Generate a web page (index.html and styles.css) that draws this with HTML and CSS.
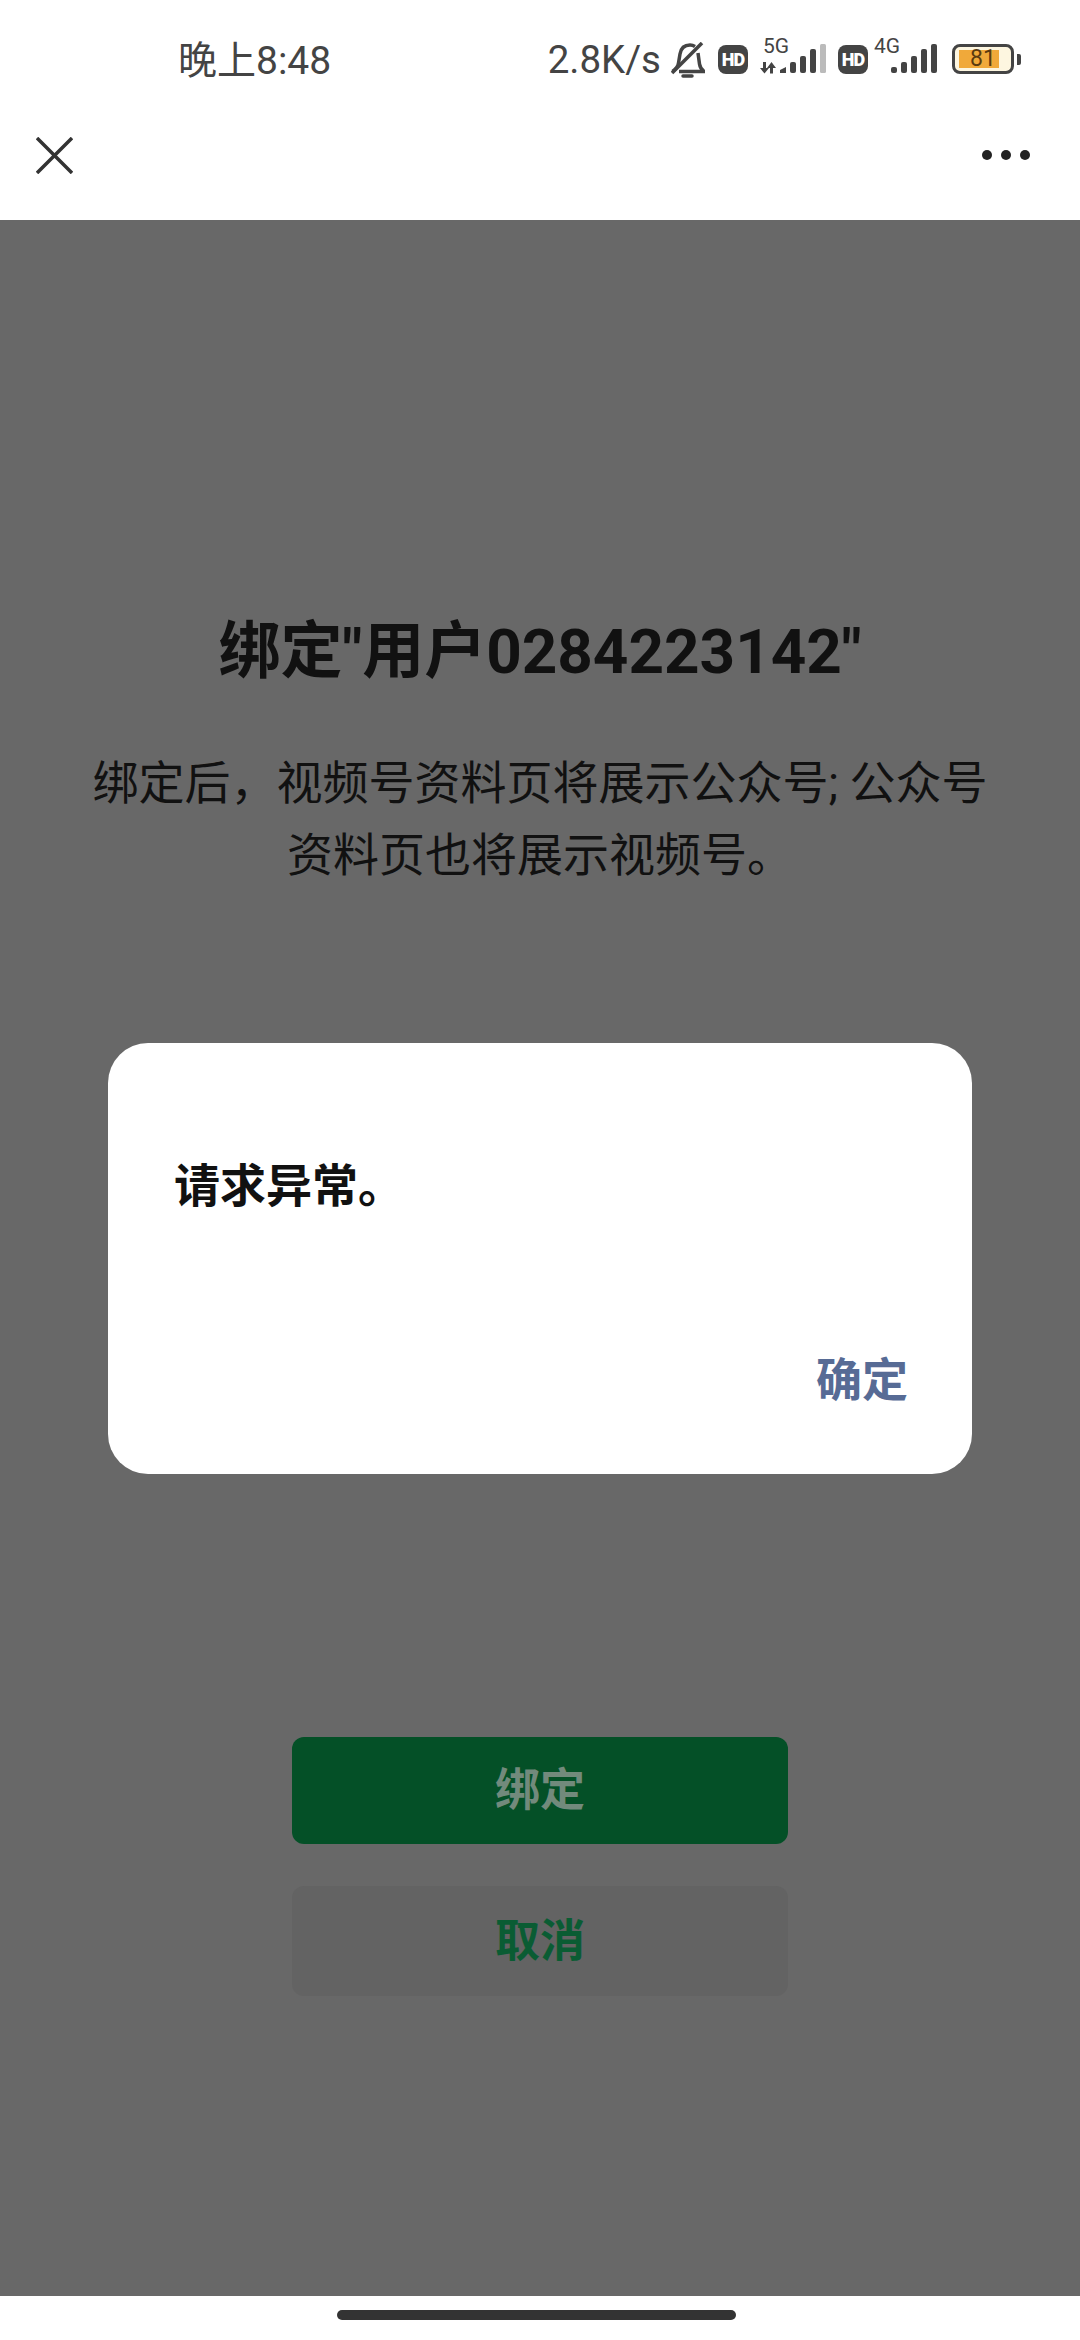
FILE: index.html
```html
<!DOCTYPE html>
<html lang="zh-CN">
<head>
    <meta charset="UTF-8">
    <meta name="viewport" content="width=device-width, initial-scale=1.0">
    <title>绑定视频号</title>
    <link rel="stylesheet" href="styles.css">
</head>
<body>
    <div class="app">
        <div class="status-bar">
            <span class="time">晚上8:48</span>
            <span class="speed">2.8K/s</span>
            <svg class="bell" width="34" height="36" viewBox="0 0 34 36" fill="none" stroke="#444" stroke-width="3.500">
                <path d="M1.500 29.500C5 27 7 25 7.500 21L9 12C10 6 14 3 19 3c2 0 3.500.5 5 1.500"/>
                <path d="M27 11l1.500 11c.5 3.500 2 5.500 4.500 7.500H8"/>
                <path d="M1 31 31 1"/>
                <path d="M12 34h9" stroke-linecap="round"/>
            </svg>
            <span class="hd hd-first">HD</span>
            <div class="signal signal-5g">
                <span class="net">5G</span>
                <svg width="67" height="30" viewBox="0 0 67 30" fill="#444">
                    <path d="M3 18h3v6h3l-4.500 5.500L0 24h3zM10 29.500h3V24h3l-4.500-6L7 24h3z"/>
                    <path d="M20 29v-3l6-3v6z"/>
                    <rect x="30" y="18" width="6" height="11" rx="2"/>
                    <rect x="40" y="12" width="6" height="17" rx="2"/>
                    <rect x="50" y="5" width="6" height="24" rx="2"/>
                    <rect x="60" y="0" width="6" height="29" rx="1.500" fill="#bbb"/>
                </svg>
            </div>
            <span class="hd hd-second">HD</span>
            <div class="signal signal-4g">
                <span class="net">4G</span>
                <svg width="64" height="30" viewBox="0 0 64 30" fill="#444">
                    <rect x="17" y="23" width="6" height="6" rx="2"/>
                    <rect x="27" y="18" width="6" height="11" rx="2"/>
                    <rect x="37" y="12" width="6" height="17" rx="2"/>
                    <rect x="47" y="5" width="6" height="24" rx="2"/>
                    <rect x="57" y="0" width="6" height="29" rx="2"/>
                </svg>
            </div>
            <div class="battery">
                <div class="battery-body">
                    <div class="battery-fill"></div>
                    <span class="battery-num">81</span>
                </div>
                <div class="battery-tip"></div>
            </div>
        </div>

        <div class="nav">
            <svg width="37" height="37" viewBox="0 0 37 37" stroke="#333" stroke-width="3.500">
                <path d="M1 1 36 36M36 1 1 36"/>
            </svg>
            <div class="more">
                <span class="dot"></span>
                <span class="dot"></span>
                <span class="dot"></span>
            </div>
        </div>

        <div class="content">
            <h1 class="title">绑定"用户0284223142"</h1>
            <p class="desc">绑定后，视频号资料页将展示公众号; 公众号资料页也将展示视频号。</p>
            <div class="buttons">
                <button class="btn btn-primary">绑定</button>
                <button class="btn btn-cancel">取消</button>
            </div>
        </div>

        <div class="home-bar">
            <div class="home-indicator"></div>
        </div>

        <div class="dialog">
            <div class="dialog-msg">请求异常。</div>
            <div class="dialog-ok">确定</div>
        </div>
    </div>
</body>
</html>
```

FILE: styles.css
```css
body {
    margin: 0;
    font-family: Roboto, "Noto Sans CJK SC", sans-serif;
    background-color: white;
}
.app {
    position: relative;
    display: flex;
    flex-direction: column;
    width: 1080px;
    height: 2340px;
    overflow: hidden;
}
.status-bar {
    display: flex;
    align-items: center;
    height: 118px;
    padding: 0 59px 0 178px;
    color: #444;
}
.time {
    font-size: 39px;
    margin-right: auto;
    margin-top: -4px;
}
.speed {
    font-size: 38.500px;
}
.bell {
    margin-left: 10px;
    margin-top: 1px;
}
.hd {
    width: 30px;
    height: 29px;
    border-radius: 8px;
    background-color: #444;
    color: white;
    font-size: 18px;
    font-weight: 900;
    letter-spacing: -1px;
    line-height: 29px;
    text-align: center;
}
.hd-first {
    margin-left: 13px;
}
.hd-second {
    margin-left: 11px;
}
.signal {
    position: relative;
    display: flex;
    align-items: flex-end;
    height: 30px;
}
.signal-5g {
    margin-left: 12px;
}
.signal-4g {
    margin-left: 6px;
}
.net {
    position: absolute;
    top: -8px;
    font-size: 21px;
    line-height: 21px;
    color: #444;
}
.signal-5g .net {
    left: 3px;
}
.signal-4g .net {
    left: 0;
}
.battery {
    display: flex;
    align-items: center;
    gap: 3px;
    margin-left: 14px;
}
.battery-body {
    position: relative;
    box-sizing: border-box;
    width: 62px;
    height: 30px;
    border: 3px solid #444;
    border-radius: 8px;
    background-color: #fdf6e0;
}
.battery-fill {
    width: 40px;
    height: 18px;
    margin: 3px 0 0 4px;
    background-color: #f0a93a;
}
.battery-num {
    position: absolute;
    left: 0;
    right: 0;
    top: 0;
    font-size: 23px;
    line-height: 24px;
    text-align: center;
    color: #5a3a10;
}
.battery-tip {
    width: 4px;
    height: 11px;
    border-radius: 0 2px 2px 0;
    background-color: #444;
}
.nav {
    display: flex;
    align-items: center;
    justify-content: space-between;
    height: 102px;
    padding: 0 50px 28px 36px;
    box-sizing: border-box;
}
.more {
    display: flex;
    gap: 9px;
}
.dot {
    width: 10px;
    height: 10px;
    border-radius: 50%;
    background-color: #222;
}
.content {
    flex: 1;
    display: flex;
    flex-direction: column;
    align-items: center;
    padding: 397px 80px 300px;
    background-color: #686868;
    color: #111;
    text-align: center;
}
.title {
    margin: 0;
    font-size: 62px;
    font-weight: 700;
    line-height: 70px;
    white-space: nowrap;
}
.desc {
    width: 910px;
    margin: 60px 0 0;
    font-size: 46px;
    line-height: 72px;
}
.buttons {
    display: flex;
    flex-direction: column;
    gap: 42px;
    width: 496px;
    margin-top: auto;
}
.btn {
    padding: 0 0 8px;
    border: none;
    border-radius: 12px;
    font-family: "Noto Sans CJK SC", sans-serif;
    font-size: 45px;
    font-weight: 700;
}
.btn-primary {
    height: 107px;
    background-color: #045027;
    color: #728a7c;
}
.btn-cancel {
    height: 110px;
    background-color: #636363;
    color: #0a5c33;
}
.home-bar {
    display: flex;
    justify-content: center;
    height: 44px;
    padding: 14px 7px 0 0;
    box-sizing: border-box;
}
.home-indicator {
    width: 399px;
    height: 10px;
    border-radius: 5px;
    background-color: #333;
}
.dialog {
    position: absolute;
    left: 108px;
    top: 1043px;
    box-sizing: border-box;
    display: flex;
    flex-direction: column;
    justify-content: space-between;
    width: 864px;
    height: 431px;
    padding: 113px 64px 64px 66px;
    border-radius: 40px;
    background-color: white;
    font-size: 46px;
    font-weight: 700;
    line-height: 60px;
}
.dialog-msg {
    color: #111;
}
.dialog-ok {
    align-self: flex-end;
    color: #576b95;
}
```
